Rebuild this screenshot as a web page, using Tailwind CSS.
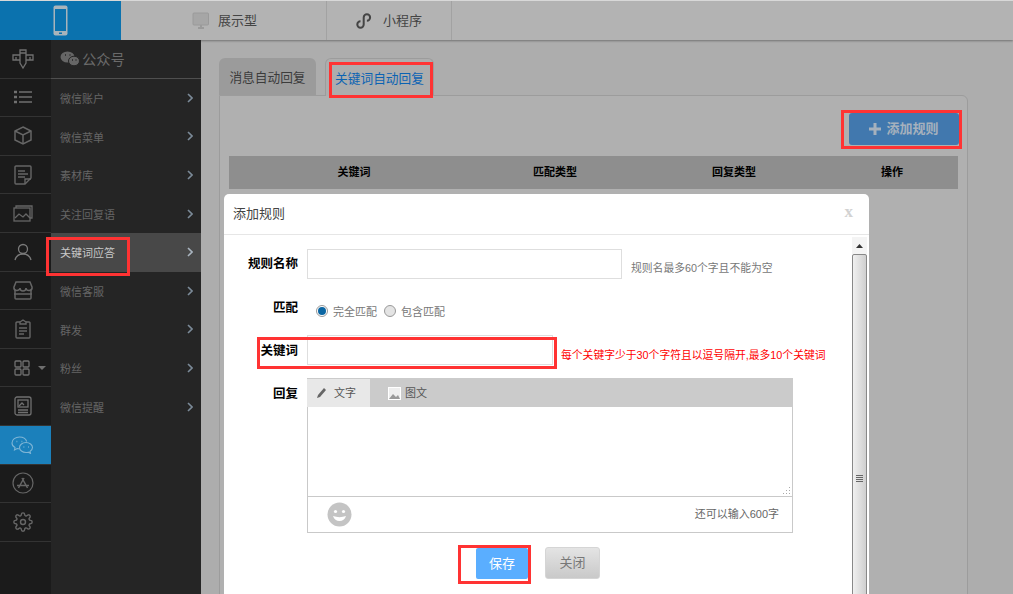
<!DOCTYPE html>
<html lang="zh-CN">
<head>
    <meta charset="UTF-8">
    <title>添加规则</title>
    <script src="https://cdn.jsdelivr.net/npm/@tailwindcss/browser@4"></script>
</head>
<body class="h-[594px] overflow-hidden bg-[#adadad] font-['Liberation_Sans','Noto_Sans_CJK_SC',sans-serif]">
<div class="relative h-[594px] w-[1013px] overflow-hidden">
    <!-- top bar -->
    <header class="flex h-[40px] border-t border-t-[#d8d8d8] bg-[#b3b3b3] shadow-[0_1px_2px_rgba(0,0,0,0.35)]">
        <div class="flex w-[121px] items-center justify-center bg-[#0b72ae]">
            <svg width="15" height="31" viewBox="0 0 15 31"><rect x="0.5" y="0.5" width="14" height="30" rx="2" fill="#a9b4bb"/><rect x="2" y="4" width="11" height="22" fill="#0b72ae"/><rect x="6" y="27.500" width="3" height="1.500" fill="#0b72ae"/></svg>
        </div>
        <div class="flex w-[206px] items-center border-r border-[#a2a2a2] pl-[71px]">
            <svg width="18" height="18" viewBox="0 0 18 18" fill="none" stroke="#9a9a9a"><rect x="1" y="1" width="15.500" height="12" rx="1" fill="#a6a6a6"/><path d="M6 16h6M9 13v3" stroke-width="2"/></svg>
            <span class="ml-[8px] text-[13px] text-[#444]">展示型</span>
        </div>
        <div class="flex w-[125px] items-center border-r border-[#a2a2a2] pl-[29px]">
            <svg width="17" height="16" viewBox="0 0 17 16" fill="none" stroke="#444" stroke-width="2"><path d="M4.500 8.300a3.200 3.200 0 1 0 3.200 3.200V4.500a3.200 3.200 0 1 1 3.200 3.200"/></svg>
            <span class="ml-[10px] text-[13px] text-[#444]">小程序</span>
        </div>
    </header>

    <div class="flex h-[554px]">
        <!-- icon rail -->
        <nav class="w-[51px] shrink-0 bg-[#1b1b1b]">
            <div class="flex h-[38.6px] items-center justify-center border-b border-[#333] pr-[6px]">
                <svg width="22" height="22" viewBox="0 0 22 22" fill="none" stroke="#707070" stroke-width="1.300"><path d="M8 2h6v13l-3 5-3-5z"/><path d="M8 7H1v5h7M14 7h7v5h-7"/><path d="M8 5h6M4 9v3M18 9v3"/></svg>
            </div>
            <div class="flex h-[38.6px] items-center justify-center border-b border-[#333] pr-[6px]">
                <svg width="18" height="14" viewBox="0 0 18 14" fill="none" stroke="#707070" stroke-width="1.300"><path d="M5 2h13M5 7h13M5 12h13"/><path d="M0 2h3M0 7h3M0 12h3" stroke-width="2.500"/></svg>
            </div>
            <div class="flex h-[38.6px] items-center justify-center border-b border-[#333] pr-[6px]">
                <svg width="18" height="19" viewBox="0 0 18 19" fill="none" stroke="#666" stroke-width="1.500"><path d="M9 1l8 4v9l-8 4-8-4V5z"/><path d="M1 5l8 4 8-4M9 9v9"/></svg>
            </div>
            <div class="flex h-[38.6px] items-center justify-center border-b border-[#333] pr-[6px]">
                <svg width="18" height="20" viewBox="0 0 18 20" fill="none" stroke="#666" stroke-width="1.400"><path d="M2 1h14a1 1 0 0 1 1 1v11l-6 6H2a1 1 0 0 1-1-1V2a1 1 0 0 1 1-1z"/><path d="M4 6h7M4 9h10M4 12h7M11 19v-5h6"/></svg>
            </div>
            <div class="flex h-[38.6px] items-center justify-center border-b border-[#333] pr-[6px]">
                <svg width="20" height="17" viewBox="0 0 20 17" fill="none" stroke="#666" stroke-width="1.300"><rect x="1" y="3" width="16" height="13"/><path d="M3 3V1h16v12h-2"/><path d="M2 13l4-4 4 3 3-3 4 4"/></svg>
            </div>
            <div class="flex h-[38.6px] items-center justify-center border-b border-[#333] pr-[6px]">
                <svg width="18" height="18" viewBox="0 0 18 18" fill="none" stroke="#7a7a7a" stroke-width="1.300"><circle cx="9" cy="6" r="4.500"/><path d="M1 17c1-4 4-6 8-6s7 2 8 6"/></svg>
            </div>
            <div class="flex h-[38.6px] items-center justify-center border-b border-[#333] pr-[6px]">
                <svg width="20" height="19" viewBox="0 0 20 19" fill="none" stroke="#666" stroke-width="1.500"><path d="M3 1h14l2 5a3 3 0 0 1-6 1 3 3 0 0 1-6 0 3 3 0 0 1-6-1z"/><path d="M2 9v8a1 1 0 0 0 1 1h14a1 1 0 0 0 1-1V9"/><path d="M1 13h18"/></svg>
            </div>
            <div class="flex h-[38.6px] items-center justify-center border-b border-[#333] pr-[6px]">
                <svg width="16" height="20" viewBox="0 0 16 20" fill="none" stroke="#666" stroke-width="1.400"><path d="M5 3H2a1 1 0 0 0-1 1v14a1 1 0 0 0 1 1h12a1 1 0 0 0 1-1V4a1 1 0 0 0-1-1h-3"/><path d="M5 5V3l3-2 3 2v2zM4 9h8M4 12h8M4 15h5"/></svg>
            </div>
            <div class="flex h-[38.6px] items-center border-b border-[#333] pl-[14px]">
                <svg width="16" height="16" viewBox="0 0 16 16" fill="none" stroke="#707070" stroke-width="1.300"><rect x="1" y="1" width="6" height="6" rx="1"/><rect x="9" y="1" width="6" height="6" rx="1"/><rect x="1" y="9" width="6" height="6" rx="1"/><rect x="9" y="9" width="6" height="6" rx="1"/></svg>
                <svg class="ml-[8px]" width="8" height="4" viewBox="0 0 8 4"><path d="M0 0h8L4 4z" fill="#6f6f6f"/></svg>
            </div>
            <div class="flex h-[38.6px] items-center justify-center border-b border-[#333] pr-[6px]">
                <svg width="18" height="20" viewBox="0 0 18 20" fill="none" stroke="#707070" stroke-width="1.300"><rect x="1" y="1" width="16" height="18" rx="2"/><rect x="4" y="4" width="10" height="7"/><path d="M4 14h10M4 16.500h10M5 10l3-3 2 2"/></svg>
            </div>
            <div class="flex h-[38.6px] items-center justify-center border-b border-[#333] bg-[#1b80bb] pr-[6px]">
                <svg width="23" height="18" viewBox="0 0 23 18" fill="none" stroke="#7fb5d6" stroke-width="1.100"><path d="M8.500 12.800c-.8 0-1.600-.1-2.300-.3L3.500 14l.5-2.400C2 10.500 1 9 1 7c0-3.500 3.500-6 7.500-6 3.300 0 6.300 1.800 7.200 4.500"/><path d="M15 6.500c-3.500 0-6.500 2.300-6.500 5s3 5 6.500 5c.8 0 1.500-.1 2.200-.3l2.300 1.200-.5-2c1.500-1 2.500-2.400 2.500-3.900 0-2.700-3-5-6.500-5z"/><path d="M5.500 5.500h.8M10.500 5.500h.8M12.500 11h.8M17 11h.8" stroke-width="1.500"/></svg>
            </div>
            <div class="flex h-[38.6px] items-center justify-center border-b border-[#333] pr-[6px]">
                <svg width="22" height="22" viewBox="0 0 22 22" fill="none" stroke="#666" stroke-width="1.200"><circle cx="11" cy="11" r="10"/><path d="M6.500 16l5.500-10M15.500 16l-5.500-10M5 13.500h12" stroke-width="1.500"/></svg>
            </div>
            <div class="flex h-[38.6px] items-center justify-center border-b border-[#333] pr-[6px]">
                <svg width="20" height="20" viewBox="0 0 24 24" fill="none" stroke="#666" stroke-width="1.700"><circle cx="12" cy="12" r="3"/><path d="M19.400 15a1.700 1.700 0 0 0 .3 1.800l.1.100a2 2 0 1 1-2.800 2.800l-.1-.1a1.700 1.700 0 0 0-2.900 1.200V21a2 2 0 0 1-4 0v-.1a1.700 1.700 0 0 0-2.900-1.200l-.1.100a2 2 0 1 1-2.800-2.800l.1-.1a1.700 1.700 0 0 0-1.200-2.900H3a2 2 0 0 1 0-4h.1a1.700 1.700 0 0 0 1.200-2.900l-.1-.1a2 2 0 1 1 2.800-2.800l.1.100a1.700 1.700 0 0 0 1.900.3H9a1.700 1.700 0 0 0 1-1.500V3a2 2 0 0 1 4 0v.1a1.700 1.700 0 0 0 2.900 1.200l.1-.1a2 2 0 1 1 2.800 2.800l-.1.100a1.700 1.700 0 0 0-.3 1.900V9a1.700 1.700 0 0 0 1.500 1H21a2 2 0 0 1 0 4h-.1a1.700 1.700 0 0 0-1.500 1z"/></svg>
            </div>
        </nav>

        <!-- sub menu -->
        <aside class="w-[150px] shrink-0 bg-[#252525] text-[11px] text-[#666]">
            <div class="flex h-[38.6px] items-center gap-[2px] border-b border-[#4f4f4f] pl-[9px] text-[14.300px] text-[#6a6a6a]">
                <svg width="20" height="16" viewBox="0 0 20 16"><ellipse cx="7.500" cy="6" rx="7" ry="5.500" fill="#666"/><ellipse cx="14" cy="10" rx="5.500" ry="4.800" fill="#666" stroke="#252525"/><path d="M5 4h1M9.500 4h1M12 9h1M15.500 9h1" stroke="#252525" stroke-width="1.300"/></svg>
                <span class="mt-[3px]">公众号</span>
            </div>
            <div class="flex h-[38.6px] items-center justify-between pl-[9px] pr-[8px]"><span class="mt-[3px]">微信账户</span><svg width="6" height="10" viewBox="0 0 6 10" fill="none" stroke="#7b8a98" stroke-width="1.600"><path d="M1 1l4 4-4 4"/></svg></div>
            <div class="flex h-[38.6px] items-center justify-between pl-[9px] pr-[8px]"><span class="mt-[3px]">微信菜单</span><svg width="6" height="10" viewBox="0 0 6 10" fill="none" stroke="#7b8a98" stroke-width="1.600"><path d="M1 1l4 4-4 4"/></svg></div>
            <div class="flex h-[38.6px] items-center justify-between pl-[9px] pr-[8px]"><span class="mt-[3px]">素材库</span><svg width="6" height="10" viewBox="0 0 6 10" fill="none" stroke="#7b8a98" stroke-width="1.600"><path d="M1 1l4 4-4 4"/></svg></div>
            <div class="flex h-[38.6px] items-center justify-between pl-[9px] pr-[8px]"><span class="mt-[3px]">关注回复语</span><svg width="6" height="10" viewBox="0 0 6 10" fill="none" stroke="#7b8a98" stroke-width="1.600"><path d="M1 1l4 4-4 4"/></svg></div>
            <div class="flex h-[38.6px] items-center justify-between bg-[#484848] pl-[9px] pr-[8px] text-[#c8c8c8]"><span class="mt-[1px]">关键词应答</span><svg width="6" height="10" viewBox="0 0 6 10" fill="none" stroke="#a9b4bf" stroke-width="1.600"><path d="M1 1l4 4-4 4"/></svg></div>
            <div class="flex h-[38.6px] items-center justify-between pl-[9px] pr-[8px]"><span class="mt-[3px]">微信客服</span><svg width="6" height="10" viewBox="0 0 6 10" fill="none" stroke="#7b8a98" stroke-width="1.600"><path d="M1 1l4 4-4 4"/></svg></div>
            <div class="flex h-[38.6px] items-center justify-between pl-[9px] pr-[8px]"><span class="mt-[3px]">群发</span><svg width="6" height="10" viewBox="0 0 6 10" fill="none" stroke="#7b8a98" stroke-width="1.600"><path d="M1 1l4 4-4 4"/></svg></div>
            <div class="flex h-[38.6px] items-center justify-between pl-[9px] pr-[8px]"><span class="mt-[3px]">粉丝</span><svg width="6" height="10" viewBox="0 0 6 10" fill="none" stroke="#7b8a98" stroke-width="1.600"><path d="M1 1l4 4-4 4"/></svg></div>
            <div class="flex h-[38.6px] items-center justify-between pl-[9px] pr-[8px]"><span class="mt-[3px]">微信提醒</span><svg width="6" height="10" viewBox="0 0 6 10" fill="none" stroke="#7b8a98" stroke-width="1.600"><path d="M1 1l4 4-4 4"/></svg></div>
        </aside>

        <!-- main -->
        <main class="flex-1 pl-[18px] pt-[18px]">
            <div class="flex h-[37px] items-end gap-[9px]">
                <div class="flex h-[37px] w-[97px] items-center justify-center rounded-t-md bg-[#9b9b9b] pt-[5px] text-[12.700px] text-[#3c3c3c]">消息自动回复</div>
                <div class="-mb-px flex h-[38px] w-[109px] items-center justify-center rounded-t-md border border-b-0 border-[#9c9c9c] bg-[#adadad] pt-[5px] text-[12.700px] text-[#0b63b3]">关键词自动回复</div>
            </div>
            <section class="h-[500px] w-[749px] rounded-tr-md border border-[#9c9c9c] bg-[#b0b0b0] pl-[9px] pr-[8px] pt-[17px]">
                <div class="flex justify-end">
                    <div class="flex h-[32px] w-[110px] items-center justify-center gap-[5px] rounded-[3px] bg-[#4178ae] text-[13px] font-bold text-[#a6b1bd]">
                        <svg width="12" height="12" viewBox="0 0 12 12"><path d="M0 6h12M6 0v12" stroke="#a6b1bd" stroke-width="3"/></svg>
                        <span>添加规则</span>
                    </div>
                </div>
                <div class="mt-[11px] grid h-[33px] w-[729px] grid-cols-[250px_152px_206px_110px] items-center bg-[#8e8e8e] text-center text-[11px] font-bold text-black">
                    <span>关键词</span><span>匹配类型</span><span>回复类型</span><span>操作</span>
                </div>
            </section>
        </main>
    </div>

    <!-- add-rule dialog -->
    <div class="absolute left-[224px] top-[194px] h-[420px] w-[645px] rounded-t-[5px] bg-white">
        <div class="flex h-[41px] items-center justify-between border-b border-[#e6e6e6] pl-[9px] pr-[16px]">
            <span class="text-[13px] text-[#444]">添加规则</span>
            <span class="-mt-[5px] font-['Liberation_Serif'] text-[17px] font-bold leading-none text-[#d2d2d2]">x</span>
        </div>
        <div class="relative pl-[24px] pt-[14px]">
            <div class="flex h-[30px] items-center">
                <span class="w-[50px] text-[12.500px] font-bold text-black">规则名称</span>
                <div class="ml-[9px] h-[30px] w-[315px] border border-[#dedede]"></div>
                <span class="ml-[9px] mt-[9px] text-[10.800px] text-[#777]">规则名最多60个字且不能为空</span>
            </div>
            <div class="mt-[18px] flex h-[22px] items-center">
                <span class="w-[50px] text-right text-[12.500px] font-bold text-black">匹配</span>
                <div class="ml-[18px] mt-[6px] flex items-center text-[11px] text-[#777]">
                    <span class="flex h-[12px] w-[12px] items-center justify-center rounded-full border border-[#999] bg-white"><span class="h-[8px] w-[8px] rounded-full bg-[#0b66a3]"></span></span>
                    <span class="ml-[5px] mt-[2px]">完全匹配</span>
                    <span class="ml-[7px] h-[12px] w-[12px] rounded-full border border-[#999] bg-[#e4e4e4]"></span>
                    <span class="ml-[5px] mt-[2px]">包含匹配</span>
                </div>
            </div>
            <div class="mt-[17px] flex h-[31px] items-center">
                <span class="w-[50px] text-right text-[12.500px] font-bold text-black">关键词</span>
                <div class="-mt-[3px] ml-[9px] h-[30px] w-[246px] border border-[#dedede]"></div>
                <span class="ml-[8px] mt-[7px] text-[10.800px] text-[#ff0000]">每个关键字少于30个字符且以逗号隔开,最多10个关键词</span>
            </div>
            <div class="mt-[11px] flex">
                <span class="w-[50px] pt-[7px] text-right text-[12.500px] font-bold text-black">回复</span>
                <div class="ml-[9px] w-[486px] border-x border-b border-[#c9c9c9]">
                    <div class="-mx-px flex h-[29px] bg-[#cbcbcb] pt-px text-[11px] text-[#555]">
                        <div class="flex w-[63px] items-center gap-[6px] bg-[#e8e8e8] pl-[9px]">
                            <svg width="12" height="12" viewBox="0 0 12 12"><path d="M1 11l1-3 6-7 2 2-6 7z" fill="#666"/></svg><span>文字</span>
                        </div>
                        <div class="ml-[18px] flex items-center gap-[4px]">
                            <svg width="13" height="13" viewBox="0 0 13 13"><rect x="0.500" y="0.500" width="12" height="12" fill="#eee" stroke="#fff"/><path d="M1 12l4-5 3 3 2-2 2 4z" fill="#999"/></svg><span>图文</span>
                        </div>
                    </div>
                    <div class="relative h-[90px] border-b border-[#c9c9c9]">
                        <svg class="absolute bottom-[1px] right-[1px]" width="9" height="9" viewBox="0 0 9 9" fill="#aaa"><path d="M7 1h1v1H7zM4 4h1v1H4zM7 4h1v1H7zM1 7h1v1H1zM4 7h1v1H4zM7 7h1v1H7z"/></svg>
                    </div>
                    <div class="flex h-[35px] items-center justify-between pl-[19px] pr-[13px]">
                        <svg width="25" height="25" viewBox="0 0 25 25"><circle cx="12.500" cy="12.500" r="12" fill="#c4c4c4"/><circle cx="8.500" cy="9.500" r="1.600" fill="#fff"/><circle cx="16.500" cy="9.500" r="1.600" fill="#fff"/><path d="M6 14c4 1.500 9 1.500 13 0-1 3.500-3.500 5-6.500 5S7 17.500 6 14z" fill="#fff"/></svg>
                        <span class="text-[11px] text-[#666]">还可以输入600字</span>
                    </div>
                </div>
            </div>
            <div class="ml-[228px] mt-[14px] flex items-start gap-[17px]">
                <div class="mt-px flex h-[31px] w-[52px] items-center justify-center rounded-[2px] bg-[#5aaeff] text-[13px] text-white">保存</div>
                <div class="flex h-[32px] w-[55px] items-center justify-center rounded-[3px] border border-[#d5d5d5] bg-linear-to-b from-[#e4e4e4] to-[#c9c9c9] text-[13px] text-[#777]">关闭</div>
            </div>
            <!-- scrollbar -->
            <div class="absolute right-[2px] top-[2px] w-[15px] bg-[#f4f4f4]">
                <div class="flex h-[17px] items-center justify-center"><svg width="7" height="4" viewBox="0 0 7 4"><path d="M0 4h7L3.500 0z" fill="#333"/></svg></div>
                <div class="flex h-[448px] items-center justify-center rounded-[2px] border border-[#888] bg-linear-to-r from-[#f0f0f0] to-[#cfcfcf]">
                    <div class="h-[7px] w-[7px] bg-[linear-gradient(#666_1px,transparent_1px)] bg-[length:7px_2px]"></div>
                </div>
            </div>
        </div>
    </div>

    <!-- red annotation boxes -->
    <div class="absolute left-[46px] top-[237px] h-[39px] w-[84px] border-[3px] border-[#f33]"></div>
    <div class="absolute left-[329px] top-[62px] h-[36px] w-[104px] border-[3px] border-[#f33]"></div>
    <div class="absolute left-[841px] top-[110px] h-[39px] w-[121px] border-[3px] border-[#f33]"></div>
    <div class="absolute left-[257px] top-[337px] h-[32px] w-[300px] border-[3px] border-[#f33]"></div>
    <div class="absolute left-[458px] top-[545px] h-[39px] w-[73px] border-[3px] border-[#f33]"></div>
</div>
</body>
</html>
